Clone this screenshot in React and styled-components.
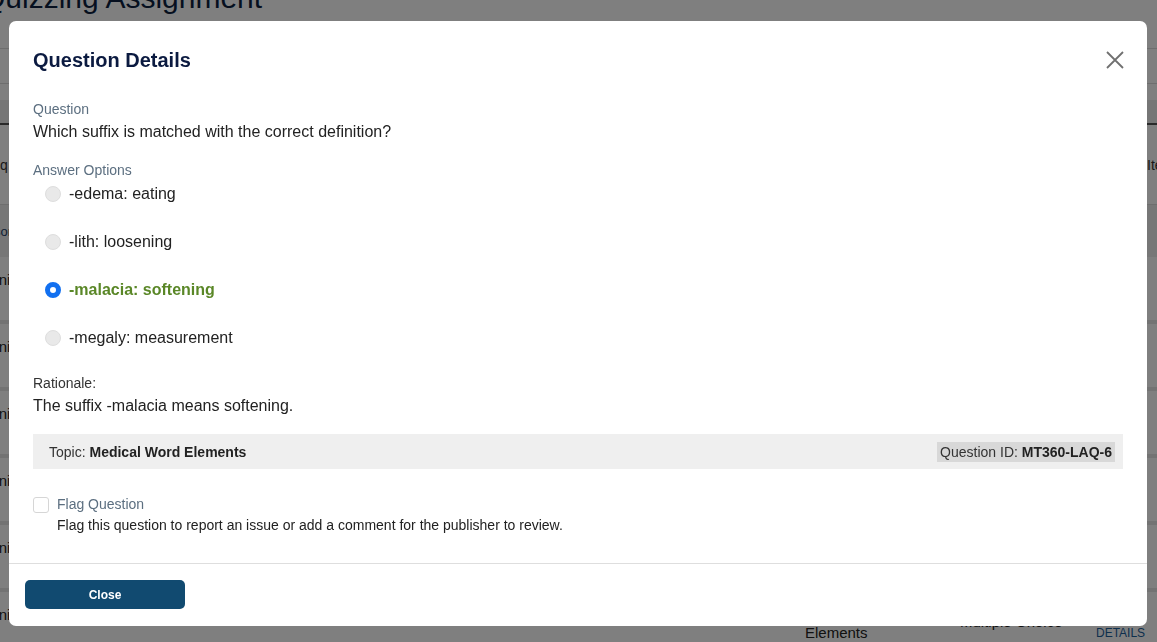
import React from "react";
import styled, { createGlobalStyle } from "styled-components";

const Global = createGlobalStyle`
  html, body { margin: 0; padding: 0; }
  body {
    font-family: "Liberation Sans", Arial, sans-serif;
    background: #ffffff;
    width: 1157px;
    height: 642px;
    overflow: hidden;
  }
  * { box-sizing: border-box; }
`;

/* ---------- background page ---------- */
const Page = styled.div`
  width: 1260px;
  height: 680px;
  margin: -22px 0 0 -33px;
  background: #fff;
  overflow: hidden;
`;
const PageTitle = styled.h1`
  margin: 0;
  font-size: 30px;
  font-weight: 400;
  color: #0c1f3f;
  height: 70px;
  line-height: 40px;
  padding-left: 15px;
  white-space: nowrap;
`;
const Rule = styled.div`
  height: ${(p) => p.h};
  border-top: 1px solid #dcdcdc;
`;
const Tabs = styled.div`
  height: 25px;
  background: #ececec;
  border-bottom: 2px solid #555;
`;
const TableHead = styled.div`
  display: grid;
  grid-template-columns: 1180px 1fr;
  height: 80px;
  align-items: center;
  font-size: 14px;
  color: #333;
  border-bottom: 1px solid #ddd;
`;
const HeadCell = styled.span`
  padding-left: ${(p) => p.pl || "0"};
`;
const BandRow = styled.div`
  height: 52px;
  background: #eeeeee;
  display: flex;
  align-items: center;
  font-size: 13px;
  color: #1b3f6a;
  padding-left: 6px;
`;
const Row = styled.div`
  display: grid;
  grid-template-columns: 838px 155px 136px 1fr;
  height: 67px;
  border-bottom: 4px solid #e6e6e6;
  align-items: start;
  font-size: 15px;
  color: #222;
`;
const Cell = styled.div`
  color: ${(p) => p.c || "#222"};
  font-size: ${(p) => p.fs || "15px"};
  line-height: 18px;
  padding-top: ${(p) => p.pt || "19px"};
  white-space: nowrap;
`;

/* ---------- modal ---------- */
const Overlay = styled.div`
  position: fixed;
  inset: 0;
  background: rgba(0, 0, 0, 0.5);
  padding: 21px 0 0 9px;
`;
const Modal = styled.div`
  width: 1138px;
  height: 605px;
  background: #fff;
  border-radius: 7px;
  display: flex;
  flex-direction: column;
  overflow: hidden;
`;
const Header = styled.div`
  display: flex;
  align-items: center;
  justify-content: space-between;
  padding: 27px 22px 0 24px;
  height: 51px;
`;
const Title = styled.h2`
  margin: 0;
  font-size: 20px;
  line-height: 24px;
  font-weight: 700;
  color: #0b1a40;
`;
const CloseX = styled.button`
  border: 0;
  background: none;
  padding: 0;
  width: 20px;
  height: 20px;
  display: flex;
  align-items: center;
  justify-content: center;
  cursor: pointer;
`;
const Body = styled.div`
  flex: 1;
  padding: 27px 24px 0 24px;
  display: flex;
  flex-direction: column;
`;
const Label = styled.div`
  font-size: 14px;
  line-height: 20px;
  color: ${(p) => p.c || "#5c6f80"};
  margin-top: ${(p) => p.mt || "0"};
`;
const Text = styled.div`
  font-size: 16px;
  line-height: 22px;
  color: #222;
  margin-top: 2px;
`;
const Options = styled.div`
  display: flex;
  flex-direction: column;
  gap: 24px;
  margin-top: 2px;
  padding-left: 12px;
`;
const Option = styled.div`
  display: flex;
  align-items: center;
  gap: 8px;
  height: 24px;
  font-size: 16px;
  color: ${(p) => (p.correct ? "#5a8727" : "#222")};
  font-weight: ${(p) => (p.correct ? 700 : 400)};
`;
const Radio = styled.span`
  width: 16px;
  height: 16px;
  border-radius: 50%;
  flex: none;
  background: ${(p) => (p.checked ? "#fff" : "#e9e9e9")};
  border: ${(p) => (p.checked ? "5px solid #1270f0" : "1px solid #dedede")};
`;
const TopicBar = styled.div`
  margin-top: 17px;
  height: 35px;
  background: #efefef;
  display: flex;
  align-items: center;
  justify-content: space-between;
  padding: 0 8px 0 16px;
  font-size: 14px;
  color: #333;
`;
const Strong = styled.b`
  color: #222;
  font-weight: 700;
`;
const IdTag = styled.span`
  background: #d8d8d8;
  height: 20px;
  line-height: 20px;
  padding: 0 3px;
`;
const FlagRow = styled.div`
  margin-top: 28px;
  display: flex;
  gap: 8px;
  align-items: flex-start;
`;
const Check = styled.span`
  width: 16px;
  height: 16px;
  border: 1px solid #d6d6d6;
  border-radius: 3px;
  flex: none;
  background: #fff;
`;
const FlagText = styled.div`
  display: flex;
  flex-direction: column;
  margin-top: -3px;
`;
const SmallText = styled.div`
  font-size: 14px;
  line-height: 20px;
  color: #222;
  margin-top: 1px;
`;
const Footer = styled.div`
  height: 63px;
  border-top: 1px solid #dedede;
  padding: 16px 16px 0 16px;
`;
const Button = styled.button`
  width: 160px;
  height: 29px;
  border: 0;
  border-radius: 5px;
  background: #114a70;
  color: #fff;
  font-family: "Liberation Sans", Arial, sans-serif;
  font-weight: 700;
  font-size: 12px;
  cursor: pointer;
`;

const options = [
  { t: "-edema: eating" },
  { t: "-lith: loosening" },
  { t: "-malacia: softening", correct: true },
  { t: "-megaly: measurement" },
];

export default function App() {
  return (
    <>
      <Global />
      <Page>
        <PageTitle>Quizzing Assignment</PageTitle>
        <Rule h="35px" />
        <Rule h="17px" />
        <Tabs />
        <TableHead>
          <HeadCell pl="16px">Seq</HeadCell>
          <HeadCell>Item</HeadCell>
        </TableHead>
        <BandRow>Lesson 1</BandRow>
        {[0, 1, 2, 3, 4, 5].map((i) => (
          <Row key={i}>
            <Cell pt="14px">Technical Terms</Cell>
            <Cell pt="14px">{i === 5 ? <>Medical Word<br />Elements</> : ""}</Cell>
            <Cell pt="21px">Multiple Choice</Cell>
            <Cell pt="32px" c="#1a5e9a" fs="12px">DETAILS</Cell>
          </Row>
        ))}
      </Page>
      <Overlay>
        <Modal role="dialog" aria-label="Question Details">
          <Header>
            <Title>Question Details</Title>
            <CloseX aria-label="Close">
              <svg width="18" height="18" viewBox="0 0 18 18">
                <path
                  d="M1 1 L17 17 M17 1 L1 17"
                  stroke="#707070"
                  strokeWidth="1.8"
                  fill="none"
                />
              </svg>
            </CloseX>
          </Header>
          <Body>
            <Label>Question</Label>
            <Text>Which suffix is matched with the correct definition?</Text>
            <Label mt="17px">Answer Options</Label>
            <Options>
              {options.map((o) => (
                <Option key={o.t} correct={o.correct}>
                  <Radio checked={o.correct} />
                  {o.t}
                </Option>
              ))}
            </Options>
            <Label mt="23px" c="#333">Rationale:</Label>
            <Text>The suffix -malacia means softening.</Text>
            <TopicBar>
              <span>
                Topic: <Strong>Medical Word Elements</Strong>
              </span>
              <IdTag>
                Question ID: <Strong>MT360-LAQ-6</Strong>
              </IdTag>
            </TopicBar>
            <FlagRow>
              <Check />
              <FlagText>
                <Label>Flag Question</Label>
                <SmallText>
                  Flag this question to report an issue or add a comment for the
                  publisher to review.
                </SmallText>
              </FlagText>
            </FlagRow>
          </Body>
          <Footer>
            <Button>Close</Button>
          </Footer>
        </Modal>
      </Overlay>
    </>
  );
}
